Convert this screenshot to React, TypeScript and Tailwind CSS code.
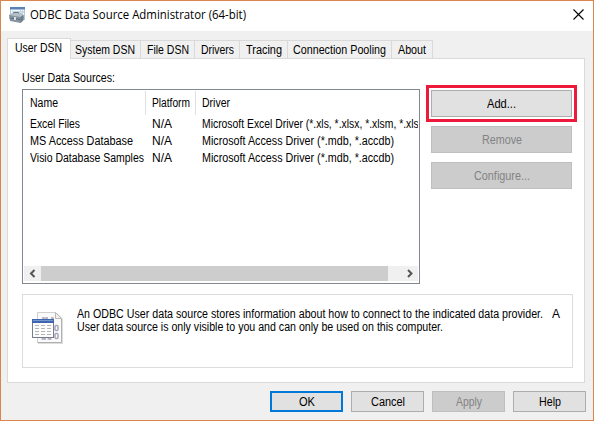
import { useLayoutEffect, useRef, useState } from "react";
import type { ReactNode } from "react";

/* A single line of text condensed or widened to a given width. */
function Fit({ w, children, className = "" }: { w: number; children: ReactNode; className?: string }) {
  const ref = useRef<HTMLSpanElement>(null);
  const [scale, setScale] = useState(1);
  useLayoutEffect(() => {
    if (ref.current) setScale(w / ref.current.getBoundingClientRect().width * scale);
  }, [w]);
  return (
    <span className={`block h-[14px] shrink-0 leading-[14px] ${className}`} style={{ width: w }}>
      <span
        ref={ref}
        className="block w-max origin-left whitespace-pre leading-[14px]"
        style={{ transform: `scaleX(${scale})` }}
      >
        {children}
      </span>
    </span>
  );
}

function PushButton({ label, w, className }: { label: string; w: number; className: string }) {
  return (
    <button className={`flex shrink-0 justify-center border ${className}`}>
      <Fit w={w}>{label}</Fit>
    </button>
  );
}

const normal = "border-[#adadad] bg-[#e1e1e1]";
const disabled = "border-[#bfbfbf] bg-[#cccccc] text-[#838383]";
const side = "h-[27px] w-[141px] pt-[6px]";
const foot = "h-[21px] w-[73px] pt-[3px]";

const tabs = [
  { label: "System DSN", text: 60, box: "w-[70px] pl-[4px]" },
  { label: "File DSN", text: 42, box: "w-[54px] pl-[6px]" },
  { label: "Drivers", text: 33, box: "w-[45px] pl-[6px]" },
  { label: "Tracing", text: 36, box: "w-[48px] pl-[6px]" },
  { label: "Connection Pooling", text: 93, box: "w-[104px] pl-[5px]" },
  { label: "About", text: 28, box: "w-[41px] pl-[6px]" },
];

const rows = [
  { name: "Excel Files", nw: 50, driver: "Microsoft Excel Driver (*.xls, *.xlsx, *.xlsm, *.xlsb)", dw: 226 },
  { name: "MS Access Database", nw: 103, driver: "Microsoft Access Driver (*.mdb, *.accdb)", dw: 192 },
  { name: "Visio Database Samples", nw: 114, driver: "Microsoft Access Driver (*.mdb, *.accdb)", dw: 192 },
];

function ToolboxIcon() {
  return (
    <svg width="17" height="17" viewBox="0 0 17 17" className="shrink-0">
      <rect x="1.5" y=".5" width="14" height="12" fill="#f3f7fb" stroke="#b9c6d4" />
      <rect x="1" y="0" width="15" height="2.5" fill="#5b82b8" />
      <path d="M10 5.5h5M3 4.5h12M11.5 3v5M13.5 3v5" stroke="#c8d8e8" />
      <path d="M4.5 7V5.5h5V7" fill="none" stroke="#68747d" />
      <path d="M0 8l3-1.500h9l2.500 1.500v5l-3 3L1 14z" fill="#8594a0" />
      <path d="M0 8l3-1.500h9l2.500 1.500-3 2z" fill="#b3bfc9" />
      <path d="M.5 11l11 1.500 3-2" fill="none" stroke="#5f6e7b" />
      <path d="M5 10h2v3H5z" fill="#dae0e4" />
      <path d="M11.500 16l3-3V8l-3 2z" fill="#6b7e8d" />
    </svg>
  );
}

function DataFileIcon() {
  return (
    <svg width="32" height="33" viewBox="0 0 32 33" className="shrink-0">
      <path d="M6 1h19l6 6v25H6z" fill="#dedede" />
      <path d="M5.5.5h18l6 6v24h-24z" fill="#fafafa" stroke="#cfcfcf" />
      <path d="M29.5 6.5v24h-24" fill="none" stroke="#b0b0b0" />
      <path d="M23.5.5v6h6z" fill="#f0f0f0" stroke="#b8b8b8" />
      <g fill="none" stroke="#a9a6bb" strokeWidth="1.5">
        <path d="M10 6h2v7M16 6h-2v4h4M19 6h2v7" />
        <rect x="23" y="13.5" width="3" height="5" rx="1" />
        <path d="M10 22h2v5M9.5 27h4.5M16 22h2v5M15.5 27h4" />
        <rect x="23" y="21.5" width="3" height="5" rx="1" />
      </g>
      <rect x=".5" y="7.5" width="21" height="18" fill="#fdfdfd" stroke="#777d90" />
      <rect x="0" y="7" width="22" height="4" fill="#3f65b0" />
      <path d="M1 8.500h20" stroke="#7497d1" />
      <path d="M3 13.500h4m2 0h4m2 0h4M3 16.500h4m2 0h4m2 0h4M3 19.500h4m2 0h4m2 0h4M3 22.500h4m2 0h4m2 0h4" stroke="#b4b4b4" />
    </svg>
  );
}

export default function App() {
  return (
    <div className="flex h-[421px] w-[594px] flex-col border border-[#d9854f] bg-[#f0f0f0] font-['Liberation_Sans',Arial,sans-serif] text-[12px] text-black">
      <header className="flex h-[30px] shrink-0 bg-white pt-[6px] pl-[8px]">
        <ToolboxIcon />
        <Fit w={216} className="ml-[4px] mt-[1px] font-['Open_Sans',sans-serif]">ODBC Data Source Administrator (64-bit)</Fit>
        <svg width="11" height="11" viewBox="0 0 11 11" className="mt-[2px] ml-auto mr-[9px]">
          <path d="M.5.5l10 10M10.5.5l-10 10" stroke="#000" strokeWidth="1.1" />
        </svg>
      </header>

      <nav className="z-10 mt-[7px] ml-[6px] flex h-[21px] shrink-0 items-end">
        <div className="h-[21px] w-[64px] border border-b-0 border-[#dadada] bg-white pt-[2px] pl-[7px]">
          <Fit w={47}>User DSN</Fit>
        </div>
        {tabs.map((t) => (
          <div key={t.label} className={`h-[19px] shrink-0 border-t border-r border-[#d9d9d9] pt-[2px] ${t.box}`}>
            <Fit w={t.text}>{t.label}</Fit>
          </div>
        ))}
      </nav>

      <main className="-mt-px ml-[6px] h-[325px] w-[578px] shrink-0 border border-[#dadada] bg-white pt-[12px] pl-[14px]">
        <Fit w={93}>User Data Sources:</Fit>
        <div className="mt-[4px] flex">
          <section className="flex h-[195px] w-[398px] flex-col border border-[#828790] p-px">
            <div className="flex h-[24px] shrink-0">
              <div className="w-[122px] border-r border-[#e0e0e0] pt-[5px] pl-[5.500px]"><Fit w={28}>Name</Fit></div>
              <div className="w-[50px] border-r border-[#e0e0e0] pt-[5px] pl-[6px]"><Fit w={38}>Platform</Fit></div>
              <div className="pt-[5px] pl-[6px]"><Fit w={28}>Driver</Fit></div>
            </div>
            <div className="mt-[2px] flex flex-col gap-[3px]">
              {rows.map((r) => (
                <div key={r.name} className="flex h-[15px] -mb-px overflow-hidden pl-[5.500px]">
                  <div className="w-[122.500px] shrink-0"><Fit w={r.nw}>{r.name}</Fit></div>
                  <div className="w-[50px] shrink-0"><Fit w={20}>N/A</Fit></div>
                  <Fit w={r.dw}>{r.driver}</Fit>
                </div>
              ))}
            </div>
            <div className="mt-auto flex h-[15px] items-center justify-between bg-[#f0f0f0] mb-px">
              <svg width="17" height="15" viewBox="0 0 17 15"><path d="M10.5 4L7 7.5l3.5 3.5" fill="none" stroke="#555" strokeWidth="2" /></svg>
              <div className="mr-auto h-[15px] w-[347px] bg-[#cdcdcd]" />
              <svg width="17" height="15" viewBox="0 0 17 15"><path d="M7 4l3.5 3.5L7 11" fill="none" stroke="#555" strokeWidth="2" /></svg>
            </div>
          </section>
          <aside className="ml-[6px] -mt-[4px] flex w-[151px] flex-col items-center">
            <div className="flex h-[37px] w-[151px] shrink-0 items-center justify-center border-[3px] border-[#ed1a3b]">
              <PushButton label="Add..." w={29} className={`${side} ${normal}`} />
            </div>
            <PushButton label="Remove" w={40} className={`mt-[4px] ${side} ${disabled}`} />
            <PushButton label="Configure..." w={56} className={`mt-[9px] ${side} ${disabled}`} />
          </aside>
        </div>
        <section className="mt-[10px] flex h-[74px] w-[551px] border border-[#dcdcdc] pt-[12px] pl-[9px]">
          <div className="mt-[5px]"><DataFileIcon /></div>
          <div className="ml-[12.500px]">
            <div className="flex">
              <Fit w={466}>An ODBC User data source stores information about how to connect to the indicated data provider.</Fit>
              <Fit w={8} className="ml-[9px]">A</Fit>
            </div>
            <Fit w={366} className="-mt-px">User data source is only visible to you and can only be used on this computer.</Fit>
          </div>
        </section>
      </main>

      <footer className="mt-[8px] ml-[269px] flex gap-[8px]">
        <button className="flex h-[21px] w-[73px] shrink-0 justify-center border-2 border-[#0078d7] bg-[#e1e1e1] pt-[2px]">
          <Fit w={16}>OK</Fit>
        </button>
        <PushButton label="Cancel" w={34} className={`${foot} ${normal}`} />
        <PushButton label="Apply" w={26} className={`${foot} ${disabled}`} />
        <PushButton label="Help" w={22} className={`${foot} ${normal}`} />
      </footer>
    </div>
  );
}
